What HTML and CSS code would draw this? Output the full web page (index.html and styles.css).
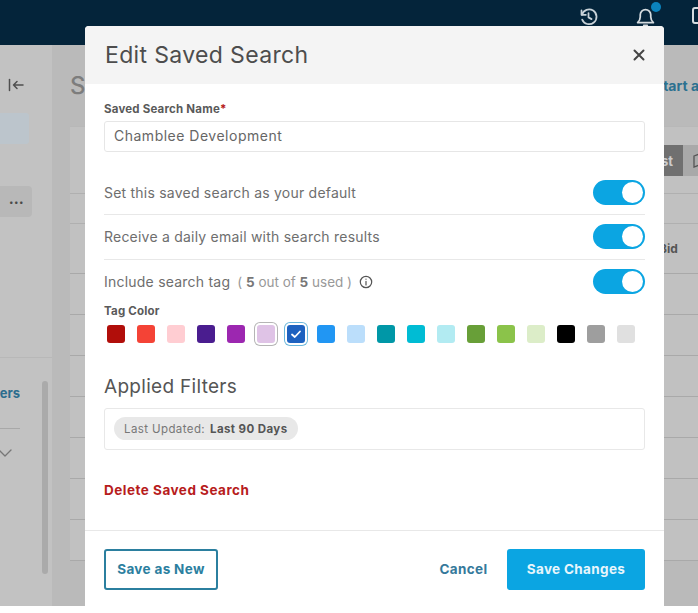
FILE: index.html
```html
<!DOCTYPE html>
<html lang="en">
  <head>
    <meta charset="UTF-8" />
    <meta name="viewport" content="width=device-width, initial-scale=1.0" />
    <title>Edit Saved Search</title>
    <link rel="stylesheet" href="styles.css">
  </head>
  <body>
    <div class="page">
      <!-- Top bar -->
      <header class="topbar">
        <svg class="top-icon history" viewBox="0 0 24 24" fill="none" stroke="#c9d2d8" stroke-width="2" stroke-linecap="round" stroke-linejoin="round">
          <path d="M4 5v5h5" />
          <path d="M4.500 10a8.500 8.500 0 1 1 .3 5.500" />
          <path d="M12 8v5l3.500 2" />
        </svg>
        <div class="bell">
          <svg class="top-icon" viewBox="0 0 24 24" fill="none" stroke="#d5dbdf" stroke-width="2" stroke-linecap="round" stroke-linejoin="round">
            <path d="M3 19h18c-2-2-3-3.500-3-6.500V10a6 6 0 0 0-12 0v2.500C6 15.500 5 17 3 19z" />
            <path d="M10 22h4" />
          </svg>
          <span class="bell-dot"></span>
        </div>
        <span class="top-box"></span>
      </header>

      <!-- Page behind the dialog -->
      <div class="app">
        <aside class="sidebar">
          <svg class="collapse" viewBox="0 0 16 16" fill="none" stroke="#4f4f4f" stroke-width="1.500" stroke-linecap="round" stroke-linejoin="round">
            <path d="M1.500 2.500v11" />
            <path d="M15 8H5.500M9 4.500 5.500 8 9 11.500" />
          </svg>
          <div class="side-active"></div>
          <div class="side-item"><span class="dots">•••</span></div>
          <div class="side-filters">
            <a class="side-link">Filters</a>
            <svg class="chevron" viewBox="0 0 14 8" fill="none" stroke="#777" stroke-width="1.300" stroke-linecap="round" stroke-linejoin="round">
              <path d="M1 1l6 6 6-6" />
            </svg>
          </div>
          <div class="side-scroll"></div>
        </aside>

        <main class="main">
          <div class="title-row">
            <h2 class="page-title">Saved Searches</h2>
            <a class="start-link">Start a new search</a>
          </div>
          <div class="card">
            <div class="toolbar">
              <span class="view-btn view-on">List</span>
              <span class="view-btn">
                <svg class="map-icon" viewBox="0 0 16 16" fill="none" stroke="#555" stroke-width="1.300">
                  <path d="M2 3l4-1.500 4 1.500 4-1.500v11L10 14l-4-1.500L2 14z" />
                </svg>
              </span>
            </div>
            <div class="table-row row-short"></div>
            <div class="table-row row-head"><span class="col-name">Bid</span></div>
            <div class="table-row"></div>
            <div class="table-row"></div>
            <div class="table-row"></div>
            <div class="table-row"></div>
            <div class="table-row"></div>
            <div class="table-row"></div>
            <div class="table-row"></div>
          </div>
        </main>
      </div>

      <!-- Dialog -->
      <section class="modal">
        <div class="modal-header">
          <h1>Edit Saved Search</h1>
          <svg class="close" viewBox="0 0 12 12" fill="none" stroke="#444" stroke-width="2" stroke-linecap="round">
            <path d="M1.500 1.500l9 9M10.500 1.500l-9 9" />
          </svg>
        </div>

        <div class="modal-body">
          <label class="field-label">Saved Search Name<span class="required">*</span></label>
          <div class="text-input">Chamblee Development</div>

          <div class="option-list">
            <div class="option">
              <span>Set this saved search as your default</span>
              <span class="toggle"></span>
            </div>
            <div class="option">
              <span>Receive a daily email with search results</span>
              <span class="toggle"></span>
            </div>
            <div class="option">
              <div class="tag-usage">
                <span>Include search tag</span>
                <span class="usage">( <b>5</b> out of <b>5</b> used )</span>
                <svg class="info" viewBox="0 0 16 16" fill="none" stroke="#555" stroke-width="1.400" stroke-linecap="round">
                  <circle cx="8" cy="8" r="6.500" />
                  <path d="M8 7.300v4M8 4.600v.2" />
                </svg>
              </div>
              <span class="toggle"></span>
            </div>
          </div>

          <div class="field-label">Tag Color</div>
          <div class="swatches">
            <span class="swatch c-darkred"></span>
            <span class="swatch c-red"></span>
            <span class="swatch c-pink"></span>
            <span class="swatch c-indigo"></span>
            <span class="swatch c-purple"></span>
            <span class="swatch c-lilac ring-grey"></span>
            <span class="swatch c-blue ring-blue">
              <svg viewBox="0 0 12 12" fill="none" stroke="#fff" stroke-width="1.800" stroke-linecap="round" stroke-linejoin="round">
                <path d="M2 6.500l2.800 2.500L10 3.500" />
              </svg>
            </span>
            <span class="swatch c-sky"></span>
            <span class="swatch c-paleblue"></span>
            <span class="swatch c-teal"></span>
            <span class="swatch c-cyan"></span>
            <span class="swatch c-palecyan"></span>
            <span class="swatch c-green"></span>
            <span class="swatch c-lime"></span>
            <span class="swatch c-palegreen"></span>
            <span class="swatch c-black"></span>
            <span class="swatch c-grey"></span>
            <span class="swatch c-lightgrey"></span>
          </div>

          <h3 class="section-title">Applied Filters</h3>
          <div class="filter-box">
            <span class="chip">Last Updated: <b>Last 90 Days</b></span>
          </div>

          <a class="delete-link">Delete Saved Search</a>
        </div>

        <div class="modal-footer">
          <button class="btn btn-outline">Save as New</button>
          <div class="footer-right">
            <button class="btn btn-text">Cancel</button>
            <button class="btn btn-primary">Save Changes</button>
          </div>
        </div>
      </section>
    </div>
  </body>
</html>
```

FILE: styles.css
```css
/* General Styles */
* {
  box-sizing: border-box;
}

body {
  margin: 0;
  background: #fff;
  font-family: Inter, "Noto Sans", Arial, sans-serif;
  color: #666;
  overflow: hidden;
}

.page {
  position: relative;
  height: 100vh;
  overflow: hidden;
}

/* Top bar */
.topbar {
  display: flex;
  align-items: flex-start;
  height: 45px;
  padding-top: 6px;
  background: #04243a;
  overflow: hidden;
}

.top-icon {
  display: block;
  flex: none;
  width: 21px;
  height: 21px;
}

.history {
  margin-left: 578px;
}

.bell {
  position: relative;
  flex: none;
  margin-left: 36px;
}

.bell-dot {
  position: absolute;
  top: -4px;
  right: -5px;
  width: 10px;
  height: 10px;
  border-radius: 50%;
  background: #0b83bd;
}

.top-box {
  flex: none;
  width: 16px;
  height: 17px;
  margin: 1px 0 0 36px;
  border: 2px solid #d5dbdf;
  border-radius: 3px;
}

/* Page behind the dialog */
.app {
  display: flex;
  height: 561px;
  background: #bababa;
}

.sidebar {
  position: relative;
  flex: 0 0 52px;
  padding-top: 32px;
  background: #c2c2c2;
}

.collapse {
  display: block;
  width: 16px;
  height: 16px;
  margin-left: 8px;
}

.side-active {
  width: 29px;
  height: 31px;
  margin-top: 20px;
  border-radius: 0 3px 3px 0;
  background: #bcc5cc;
}

.side-item {
  display: flex;
  align-items: center;
  justify-content: flex-end;
  width: 32px;
  height: 31px;
  margin-top: 42px;
  padding-right: 8px;
  border-radius: 0 4px 4px 0;
  background: #b8b8b8;
}

.dots {
  font-size: 8px;
  letter-spacing: 0.5px;
  color: #4a4a4a;
}

.side-filters {
  width: 100%;
  height: 249px;
  margin-top: 140px;
  border-top: 1px solid #b8b8b8;
  overflow: hidden;
}

.side-link {
  display: block;
  width: 20px;
  margin-top: 26px;
  padding-bottom: 26px;
  border-bottom: 1px solid #a8a8a8;
  font-size: 13px;
  font-weight: 700;
  line-height: 18px;
  color: #2c6d8e;
  direction: rtl;
  white-space: nowrap;
  overflow: hidden;
}

.chevron {
  display: block;
  width: 14px;
  height: 8px;
  margin: 20px 0 0 -2px;
}

.side-scroll {
  position: absolute;
  top: 336px;
  left: 42px;
  width: 6px;
  height: 193px;
  border-radius: 3px;
  background: #aaa;
}

.main {
  flex: 1;
  min-width: 0;
  margin-left: 18px;
  overflow: hidden;
}

.title-row {
  display: flex;
  align-items: center;
  height: 81px;
  white-space: nowrap;
}

.page-title {
  flex: 0 0 584px;
  margin: 0;
  font-size: 24px;
  font-weight: 500;
  color: #7d7d7d;
}

.start-link {
  font-size: 14px;
  font-weight: 700;
  color: #2c7190;
}

.card {
  background: #c1c1c1;
}

.toolbar {
  display: flex;
  align-items: flex-start;
  height: 68px;
  padding: 18px 0 0 580px;
  border-top: 1px solid #b8b8b8;
  border-bottom: 1px solid #b0b0b0;
}

.view-btn {
  display: flex;
  align-items: center;
  justify-content: center;
  flex: 0 0 33px;
  height: 31px;
  font-size: 13px;
  font-weight: 700;
  background: #a9a9a9;
}

.view-on {
  justify-content: flex-end;
  padding-right: 10px;
  color: #ccc;
  background: #707070;
}

.map-icon {
  width: 16px;
  height: 16px;
}

.table-row {
  height: 41px;
  border-bottom: 1px solid #a9a9a9;
}

.row-short {
  height: 30px;
  border-bottom-color: #b0b0b0;
}

.row-head {
  height: 50px;
  display: flex;
  align-items: center;
  padding-left: 589px;
  font-size: 12px;
  font-weight: 700;
  color: #555;
}

/* Dialog */
.modal {
  position: absolute;
  top: 26px;
  left: 85px;
  display: flex;
  flex-direction: column;
  width: 579px;
  height: 580px;
  border-radius: 4px 4px 0 0;
  background: #fff;
  overflow: hidden;
}

.modal-header {
  display: flex;
  align-items: center;
  justify-content: space-between;
  flex: 0 0 58px;
  padding: 0 19px 0 20px;
  background: #f4f4f4;
}

.modal-header h1 {
  margin: 0;
  font-size: 23px;
  font-weight: 400;
  letter-spacing: 0.35px;
  color: #4d4d4d;
}

.close {
  width: 12px;
  height: 12px;
}

.modal-body {
  padding: 18px 19px 0;
}

.field-label {
  display: block;
  font-size: 11.500px;
  font-weight: 700;
  line-height: 14px;
  letter-spacing: 0.2px;
  color: #5a5a5a;
}

.required {
  color: #b71c1c;
}

.text-input {
  display: flex;
  align-items: center;
  height: 31px;
  margin-top: 5px;
  padding: 0 0 2px 9px;
  border: 1px solid #e6e6e6;
  border-radius: 3px;
  font-size: 14px;
  letter-spacing: 0.5px;
  color: #666;
}

.option-list {
  margin-top: 19px;
}

.option {
  display: flex;
  align-items: center;
  justify-content: space-between;
  height: 44.300px;
  font-size: 14px;
  letter-spacing: 0.22px;
  color: #6e6e6e;
  border-bottom: 1px solid #e8e8e8;
}

.option:last-child {
  border-bottom: 0;
}

.tag-usage {
  display: flex;
  align-items: center;
}

.usage {
  margin-left: 7px;
  font-size: 13.500px;
  letter-spacing: 0;
  color: #999;
}

.usage b {
  font-weight: 700;
  color: #777;
}

.info {
  width: 14px;
  height: 14px;
  margin-left: 7px;
}

.toggle {
  position: relative;
  flex: 0 0 52px;
  height: 25px;
  border-radius: 13px;
  background: #0ba5e2;
}

.toggle::after {
  content: "";
  position: absolute;
  top: 2px;
  right: 2px;
  width: 21px;
  height: 21px;
  border-radius: 50%;
  background: #fff;
}

/* Tag colours */
.swatches {
  display: flex;
  gap: 12px;
  margin-top: 7px;
  padding-left: 3px;
}

.swatch {
  display: flex;
  align-items: center;
  justify-content: center;
  flex: 0 0 18px;
  height: 18px;
  border-radius: 3px;
}

.swatch svg {
  width: 12px;
  height: 12px;
}

.ring-grey {
  box-shadow: 0 0 0 2px #fff, 0 0 0 3px #b5b5b5;
}

.ring-blue {
  box-shadow: 0 0 0 2px #fff, 0 0 0 3px #6cb8dc;
}

.c-darkred { background: #b10e0a; }
.c-red { background: #f44336; }
.c-pink { background: #ffcdd2; }
.c-indigo { background: #4a1d8f; }
.c-purple { background: #9c27b0; }
.c-lilac { background: #dfc3e6; }
.c-blue { background: #1e62c0; }
.c-sky { background: #2196f3; }
.c-paleblue { background: #bbdefb; }
.c-teal { background: #0097a7; }
.c-cyan { background: #00bcd4; }
.c-palecyan { background: #b2ebf2; }
.c-green { background: #689f38; }
.c-lime { background: #8bc34a; }
.c-palegreen { background: #dcedc8; }
.c-black { background: #000; }
.c-grey { background: #9e9e9e; }
.c-lightgrey { background: #e0e0e0; }

.section-title {
  margin: 32px 0 0;
  font-size: 19px;
  font-weight: 400;
  line-height: 24px;
  letter-spacing: 0.3px;
  color: #555;
}

.filter-box {
  display: flex;
  align-items: center;
  height: 42px;
  margin-top: 9px;
  padding-left: 9px;
  border: 1px solid #e8e8e8;
  border-radius: 3px;
}

.chip {
  display: flex;
  align-items: center;
  gap: 5px;
  height: 23px;
  padding: 0 10px;
  border-radius: 12px;
  font-size: 11.500px;
  letter-spacing: 0.4px;
  color: #777;
  background: #e8e8e8;
}

.chip b {
  color: #555;
}

.delete-link {
  display: block;
  margin-top: 32px;
  font-size: 13.500px;
  font-weight: 700;
  line-height: 16px;
  letter-spacing: 0.5px;
  color: #b71c1c;
}

.modal-footer {
  display: flex;
  align-items: flex-start;
  justify-content: space-between;
  flex: 0 0 76px;
  margin-top: auto;
  padding: 18px 19px 0;
  border-top: 1px solid #e8e8e8;
}

.footer-right {
  display: flex;
  gap: 19px;
}

.btn {
  height: 41px;
  padding-bottom: 2px;
  border: 0;
  border-radius: 3px;
  font-family: inherit;
  font-size: 13.500px;
  font-weight: 700;
  letter-spacing: 0.35px;
  background: none;
}

.btn-outline {
  width: 114px;
  border: 2px solid #2b7f9f;
  color: #2b7f9f;
}

.btn-text {
  width: 49px;
  padding: 0 0 2px;
  color: #35799b;
}

.btn-primary {
  width: 138px;
  color: #e8f6fc;
  background: #0ba5e2;
}
```
